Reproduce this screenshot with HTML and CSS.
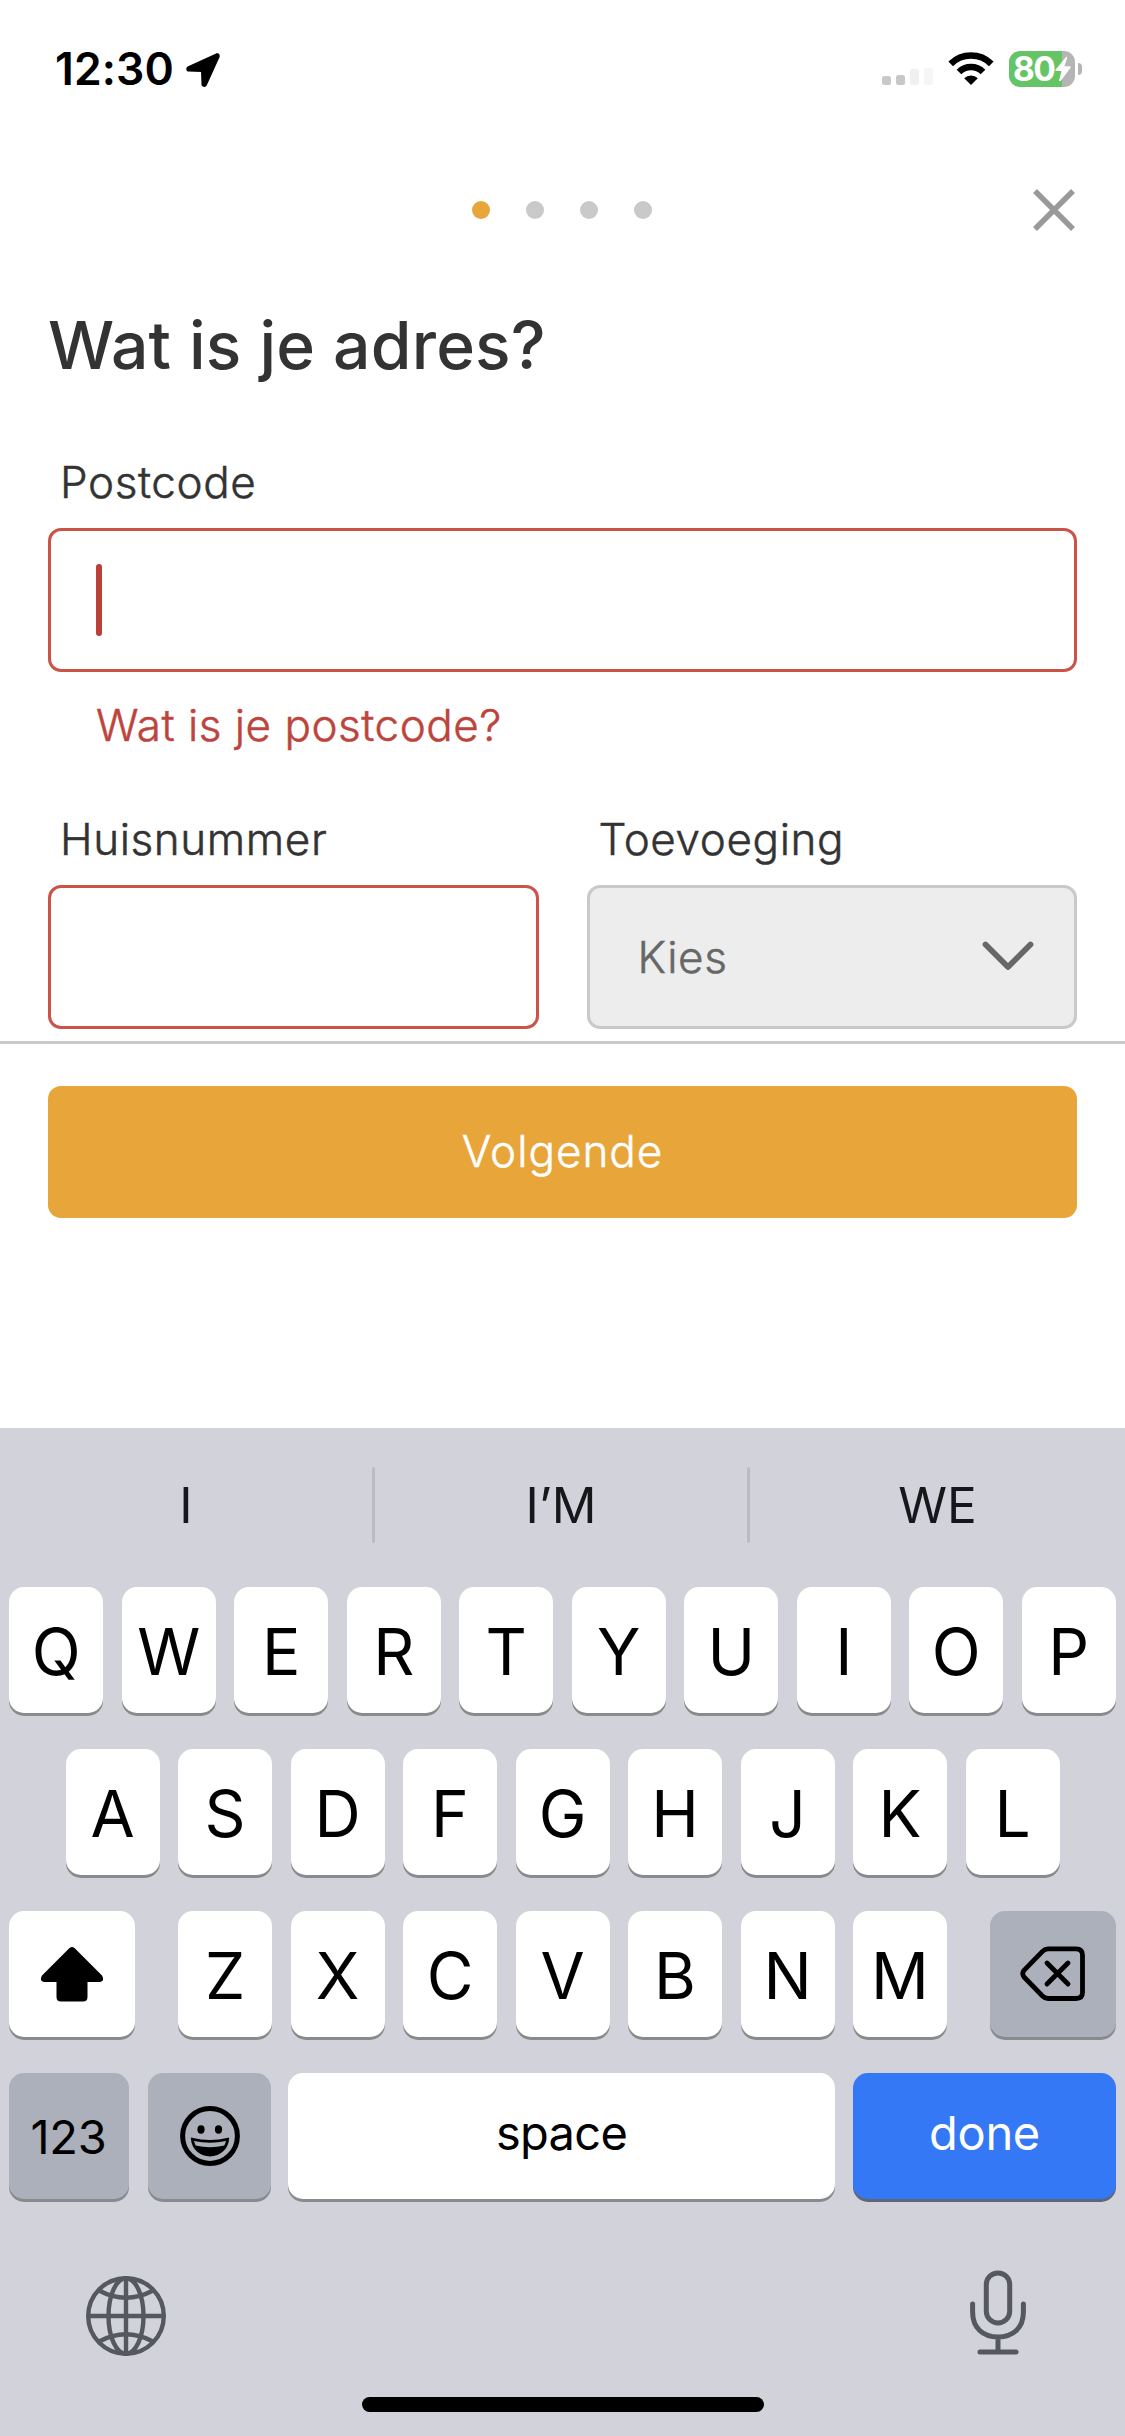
FILE: index.html
```html
<!DOCTYPE html>
<html lang="nl">
<head>
<meta charset="utf-8">
<title>Wat is je adres?</title>
<link rel="stylesheet" href="styles.css">
</head>
<body>
<header class="status">
  <div class="status-left">
    <span class="time">12:30</span>
    <svg class="location" width="36" height="36" viewBox="0 0 36 36"><path d="M31.500 2.300L3 15.500Q1.500 17 3 18.500L17 19L17.500 33Q19 35 20.800 33L33.700 4.500Q34 1.500 31.500 2.300Z" fill="#000" stroke="#000" stroke-width="2" stroke-linejoin="round"/></svg>
  </div>
  <div class="status-right">
    <svg class="signal" width="52" height="36" viewBox="0 0 52 36"><rect x="0" y="25" width="9" height="9" rx="2.500" fill="#c8c8c8"/><rect x="14" y="24" width="9" height="10" rx="2.500" fill="#c8c8c8"/><rect x="28" y="18" width="9" height="16" rx="2.500" fill="#f0f0f0"/><rect x="42" y="17" width="9" height="17" rx="2.500" fill="#f6f6f6"/></svg>
    <svg class="wifi" width="46" height="36" viewBox="0 0 46 36"><g fill="none" stroke="#000" stroke-width="6.600"><path d="M2.700 12.800a28.800 28.800 0 0 1 40.600 0"/><path d="M11 21a17 17 0 0 1 24 0"/></g><path d="M23 34l-6.800-6.700a9.600 9.600 0 0 1 13.600 0z"/></svg>
    <div class="battery">
      <span>80</span>
      <svg width="18" height="26" viewBox="0 0 18 26"><path d="M12 1L1.500 13.800Q1 15 2.200 15H7.500L5 24.500Q5.500 25.800 6.800 24.800L16.600 11.700Q17 10.300 15.800 10.300H10.300L13.300 1.800Q13 .3 12 1Z" fill="#fff"/></svg>
    </div>
    <i class="battery-cap"></i>
  </div>
</header>
<nav class="steps">
  <i class="dot active"></i><i class="dot"></i><i class="dot"></i><i class="dot"></i>
  <svg class="close" width="42" height="42" viewBox="0 0 42 42"><path d="M2 2l38 38M40 2L2 40" stroke="#999" stroke-width="5.500"/></svg>
</nav>
<main class="form">
  <h1>Wat is je adres?</h1>
  <div class="field">
    <label class="label">Postcode</label>
    <div class="input"><i class="caret"></i></div>
    <p class="error">Wat is je postcode?</p>
  </div>
  <div class="columns">
    <div class="field">
      <label class="label">Huisnummer</label>
      <div class="input"></div>
    </div>
    <div class="field">
      <label class="label">Toevoeging</label>
      <div class="input select"><span>Kies</span><svg width="52" height="30" viewBox="0 0 52 30"><path d="M3.500 3.500L26 26L48.500 3.500" fill="none" stroke="#676767" stroke-width="5.800" stroke-linecap="round" stroke-linejoin="round"/></svg></div>
    </div>
  </div>
</main>
<footer class="actions"><div class="button">Volgende</div></footer>
<section class="keyboard">
  <div class="suggestions"><span>I</span><i></i><span>I’M</span><i></i><span>WE</span></div>
  <div class="row"><b>Q</b><b>W</b><b>E</b><b>R</b><b>T</b><b>Y</b><b>U</b><b>I</b><b>O</b><b>P</b></div>
  <div class="row"><b>A</b><b>S</b><b>D</b><b>F</b><b>G</b><b>H</b><b>J</b><b>K</b><b>L</b></div>
  <div class="row spread">
    <b class="wide"><svg width="64" height="56" viewBox="0 0 64 56"><path d="M29.500 2Q32 0 34.500 2L62 29.500Q65 35 60 36H47.500V51Q47.500 55.500 43 55.500H21Q16.500 55.500 16.500 51V36H4Q-1 35 2 29.500Z"/></svg></b>
    <div class="row"><b>Z</b><b>X</b><b>C</b><b>V</b><b>B</b><b>N</b><b>M</b></div>
    <b class="wide gray"><svg width="66" height="56" viewBox="0 0 66 56"><g fill="none" stroke="#000" stroke-width="4.800" stroke-linecap="round" stroke-linejoin="round"><path d="M28 2.800H56Q62.500 2.800 62.500 9V46.500Q62.500 52.500 56 52.500H28Q25 52.500 22.500 50L4 31Q1.500 27.600 4 24.300L22.500 5.300Q25 2.800 28 2.800Z"/><path d="M27 17L48 38M48 17L27 38"/></g></svg></b>
  </div>
  <div class="row bottom">
    <b class="numbers gray">123</b>
    <b class="emoji gray"><svg width="60" height="60" viewBox="0 0 60 60"><circle cx="30" cy="30" r="27.400" fill="none" stroke="#000" stroke-width="5"/><ellipse cx="21" cy="23.500" rx="3.600" ry="4.200"/><ellipse cx="38.500" cy="23.500" rx="3.600" ry="4.200"/><path d="M10.800 32.300Q10.800 31.300 12 31.700Q30 36.500 48 31.700Q49.200 31.300 49.200 32.300C47.500 56.500 12.500 56.500 10.800 32.300Z"/><path d="M14 35Q30 38.500 46 35Q45.500 37.500 44.300 39.500Q30 43 15.700 39.500Q14.500 37.500 14 35Z" fill="#abb0bb"/></svg></b>
    <b class="space">space</b>
    <b class="done">done</b>
  </div>
  <div class="tools">
    <svg width="80" height="80" viewBox="0 0 80 80"><g fill="none" stroke="#55585d" stroke-width="4.400"><circle cx="40" cy="40" r="37.800"/><path d="M40 2V78M2 40H78"/><ellipse cx="40" cy="40" rx="17.500" ry="37.800"/><path d="M13 14.500Q40 29 67 14.500M13 65.500Q40 51 67 65.500"/></g></svg>
    <svg width="56" height="86" viewBox="0 0 56 86"><g fill="none" stroke="#55585d" stroke-width="5" stroke-linecap="round"><rect x="16.300" y="2.900" width="23.400" height="50" rx="11.700"/><path d="M2.600 34V42C2.600 58 13 67 28 67S53.400 58 53.400 42V34M28 67V82M10 82H46"/></g></svg>
  </div>
  <i class="home"></i>
</section>
</body>
</html>
```
FILE: styles.css
```css
* { box-sizing: border-box; margin: 0; padding: 0; }
body {
  width: 1125px;
  height: 2436px;
  display: flex;
  flex-direction: column;
  overflow: hidden;
  background: #fff;
  font-family: Inter, "Liberation Sans", sans-serif;
  color: #333;
}
svg { display: block; flex: none; }

.status {
  height: 138px;
  padding: 0 43px 0 55px;
  display: flex;
  justify-content: space-between;
  align-items: center;
  color: #000;
}
.status-left { display: flex; align-items: center; gap: 11px; }
.time { font-size: 44.5px; font-weight: 600; line-height: 60px; letter-spacing: .1px; }
.location { margin-top: 1px; }
.status-right { display: flex; align-items: center; }
.wifi { margin-left: 14px; }
.battery {
  width: 66px;
  height: 36px;
  margin-left: 15px;
  padding: 0 3px 0 4px;
  display: flex;
  align-items: center;
  justify-content: space-between;
  border-radius: 11px;
  background: linear-gradient(90deg, #65c466 53px, #b5b5b5 53px);
  color: #fff;
  font-size: 33.5px;
  font-weight: 700;
  line-height: 36px;
  letter-spacing: -1.500px;
}
.battery-cap { width: 4px; height: 12px; margin-left: 3px; border-radius: 0 4px 4px 0; background: #b5b5b5; }

.steps {
  position: relative;
  height: 144px;
  padding-right: 1px;
  display: flex;
  justify-content: center;
  align-items: center;
  gap: 36px;
}
.dot { width: 18px; height: 18px; border-radius: 50%; background: #c9c9c9; }
.dot.active { background: #e8a539; }
.close { position: absolute; right: 50px; top: 51px; }

.form { height: 759px; padding: 23px 48px 0; }
h1 { font-size: 66px; font-weight: 500; line-height: 80px; letter-spacing: .2px; margin-bottom: 67px; }
.label, .error, .input, .button {
  font-size: 44px;
  font-weight: 300;
  line-height: 60px;
  letter-spacing: .6px;
  -webkit-text-stroke: .5px currentColor;
}
.label { display: block; padding-left: 12px; margin-bottom: 16px; }
.input {
  height: 144px;
  padding: 0 40px 0 45px;
  display: flex;
  align-items: center;
  border: 3px solid #cc5347;
  border-radius: 13px;
}
.caret { width: 6px; height: 72px; border-radius: 3px; background: #bd4038; }
.error { margin: 23px 0 54px 48px; color: #bd443c; letter-spacing: .5px; }
.columns { display: grid; grid-template-columns: 1fr 1fr; gap: 48px; }
.select { justify-content: space-between; padding-left: 48px; border-color: #c9c9c9; background: #ededed; color: #676767; }
.select svg { margin-top: -2px; }

.actions { height: 387px; border-top: 3px solid #c9c9c9; padding: 42px 48px 0; }
.button { height: 132px; border-radius: 13px; background: #e8a539; color: #fff; line-height: 130px; text-align: center; letter-spacing: 1px; }

.keyboard {
  flex: 1;
  padding: 39px 9px 0;
  display: flex;
  flex-direction: column;
  gap: 36px;
  background: #d1d2da;
  color: #000;
}
.suggestions {
  height: 75px;
  margin: 0 -9px 9px;
  display: grid;
  grid-template-columns: 372px 3px 372px 3px 1fr;
  font-size: 49.500px;
  line-height: 76px;
  text-align: center;
  color: #16171b;
}
.suggestions i { background: #bbbcc3; border-radius: 2px; }
.row { display: flex; justify-content: center; gap: 18.500px; }
b {
  width: 94px;
  height: 126px;
  padding-top: 3px;
  display: flex;
  align-items: center;
  justify-content: center;
  border-radius: 15px;
  background: #fff;
  box-shadow: 0 3px 0 #898a8d;
  font-size: 64px;
  font-weight: 400;
  line-height: 1;
}
.spread { justify-content: space-between; }
.wide { width: 126px; padding: 0; }
.gray { background: #abb0bb; }
.bottom { gap: 18px; justify-content: flex-start; }
.numbers { width: 120px; padding: 0 1px 0 0; font-size: 47px; letter-spacing: -.3px; }
.emoji { width: 123px; margin-left: 1px; padding: 0 0 0 0; }
.space, .done { flex: none; width: 547px; padding: 0 0 8px; font-size: 47px; letter-spacing: -.7px; }
.space { margin-left: -1px; }
.done { width: 263px; background: #3478f6; color: #fff; box-shadow: 0 3px 0 #5d6777; letter-spacing: -.3px; }
.tools { display: flex; justify-content: space-between; align-items: flex-end; margin: 35px 90px 0 77px; height: 86px; }
.home { width: 402px; height: 15px; margin: 5px auto 0; border-radius: 8px; background: #000; }
```
